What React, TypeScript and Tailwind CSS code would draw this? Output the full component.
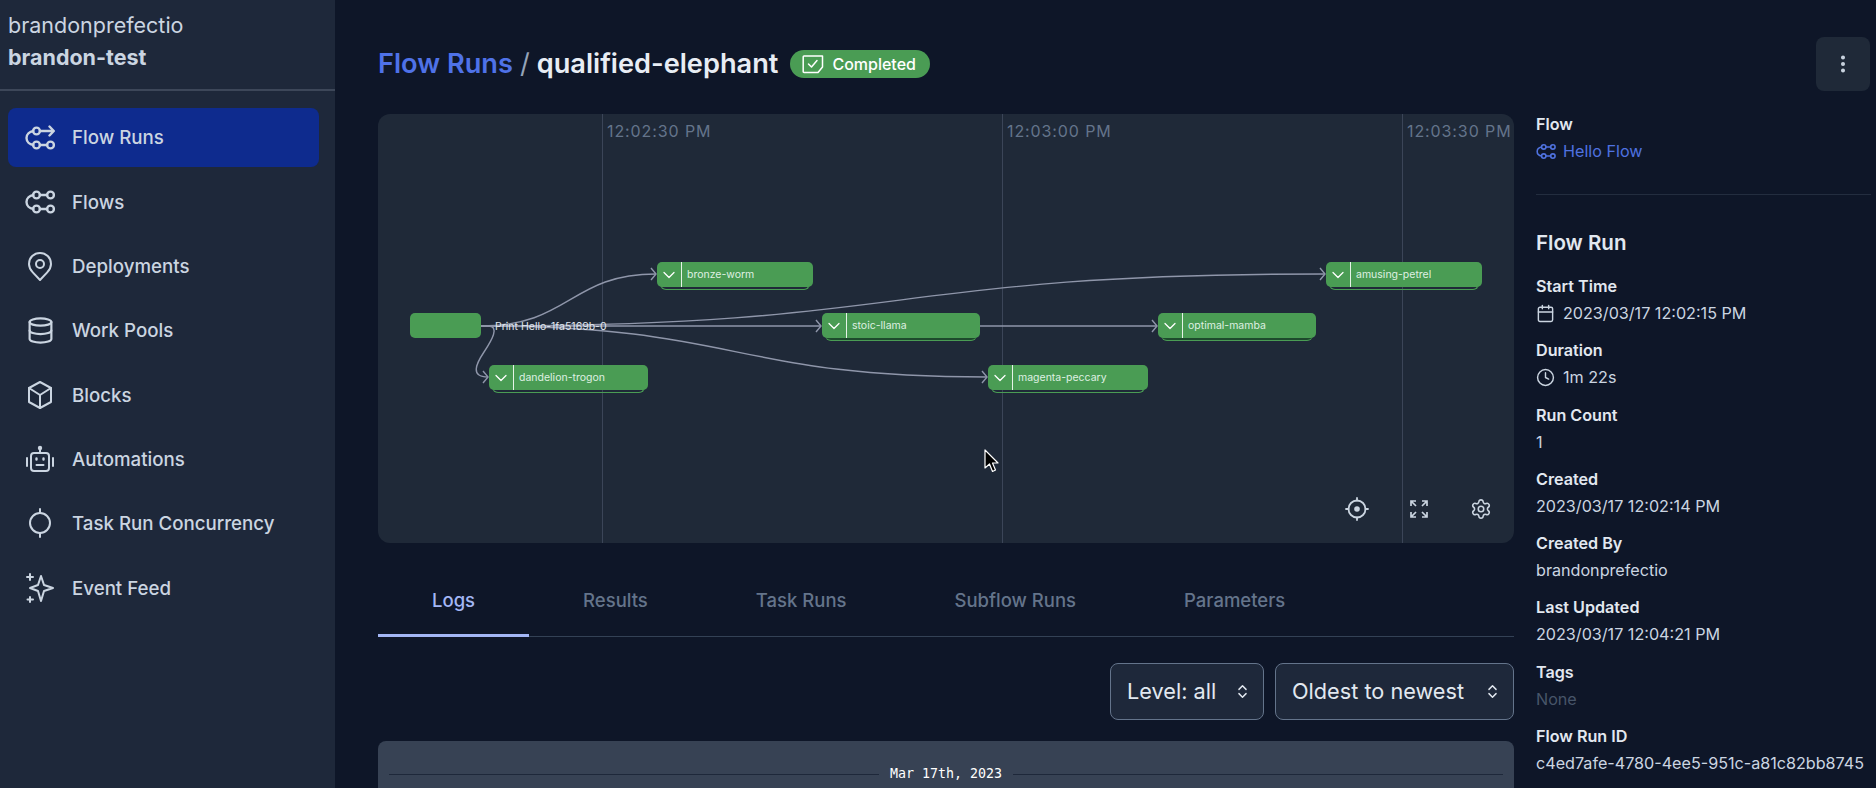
import { Calendar, ChevronDown, ChevronsUpDown, Clock, Database, EllipsisVertical, Settings } from "lucide-react";

function FlowIcon({ className, arrow }: { className: string; arrow?: boolean }) {
    return (
        <svg viewBox="0 0 30 26" fill="none" stroke="currentColor" strokeWidth="2.4" strokeLinecap="round" strokeLinejoin="round" className={className}>
            <path d="M8.3 6C4.5 6.6 1.5 9.5 1.5 13C1.5 16.5 4.5 19.4 8.3 20" />
            <circle cx="11.5" cy="6" r="3.4" />
            <circle cx="11.5" cy="20" r="3.4" />
            <path d="M14.9 20H22.1" />
            <circle cx="25.5" cy="20" r="3.4" />
            {arrow ? (
                <path d="M14.9 6H28.5M24.5 1.5L28.8 6L24.5 10.5" />
            ) : (
                <>
                    <path d="M14.9 6H22.1" />
                    <circle cx="25.5" cy="6" r="3.4" />
                </>
            )}
        </svg>
    );
}

function PinIcon() {
    return (
        <svg viewBox="0 0 30 30" fill="none" stroke="currentColor" strokeWidth="2" strokeLinecap="round" strokeLinejoin="round" className="w-[30px] h-[30px]">
            <path d="M15 29L7.8 21.4C5.4 18.8 4 16.6 4 13C4 6.5 9 2 15 2C21 2 26 6.5 26 13C26 16.6 24.6 18.8 22.2 21.4L15 29Z" />
            <circle cx="15" cy="13" r="4" />
        </svg>
    );
}

function CubeIcon() {
    return (
        <svg viewBox="0 0 30 30" fill="none" stroke="currentColor" strokeWidth="2" strokeLinecap="round" strokeLinejoin="round" className="w-[30px] h-[30px]">
            <path d="M15 2L26 8V22L15 28L4 22V8L15 2Z" />
            <path d="M4 8L15 15L26 8M15 15V28" />
        </svg>
    );
}

function BotIcon() {
    return (
        <svg viewBox="0 0 30 30" fill="none" stroke="currentColor" strokeWidth="2" strokeLinecap="round" strokeLinejoin="round" className="w-[30px] h-[30px]">
            <circle cx="15" cy="4" r="2.2" fill="currentColor" stroke="none" />
            <path d="M15 6V9" />
            <rect x="6" y="9" width="18" height="18" rx="3" />
            <path d="M2 14V22M28 14V22M11.5 21H18.5" />
            <path d="M11.5 14.5V15.5M18.5 14.5V15.5" strokeWidth="2.4" />
        </svg>
    );
}

function ConcurrencyIcon() {
    return (
        <svg viewBox="0 0 30 30" fill="none" stroke="currentColor" strokeWidth="2" strokeLinecap="round" className="w-[30px] h-[30px]">
            <circle cx="15" cy="15" r="10" />
            <path d="M15 1V5M15 25V29" />
        </svg>
    );
}

function SparkIcon() {
    return (
        <svg viewBox="0 0 30 30" fill="none" stroke="currentColor" strokeWidth="2" strokeLinecap="round" strokeLinejoin="round" className="w-[30px] h-[30px]">
            <path d="M16 3L19 12L28 15L19 18L16 28L13 18L5 15L13 12L16 3Z" />
            <path d="M5 1V7M2 4H8M5 24V29M2.5 26.5H8" />
        </svg>
    );
}

function LocateIcon() {
    return (
        <svg viewBox="0 0 24 24" fill="none" stroke="currentColor" strokeWidth="1.8" strokeLinecap="round" className="w-[24px] h-[24px]">
            <circle cx="12" cy="12" r="8.5" />
            <circle cx="12" cy="12" r="2.8" fill="currentColor" stroke="none" />
            <path d="M12 1V3.5M12 20.5V23M1 12H3.5M20.5 12H23" />
        </svg>
    );
}

function ExpandIcon() {
    return (
        <svg viewBox="0 0 20 20" fill="none" stroke="currentColor" strokeWidth="1.7" className="w-[20px] h-[20px]">
            <path d="M2 7V2H7M2 2L7 7M13 2H18V7M18 2L13 7M2 13V18H7M2 18L7 13M18 13V18H13M18 18L13 13" />
        </svg>
    );
}

function BadgeIcon() {
    return (
        <svg viewBox="0 0 22 20" fill="none" stroke="currentColor" strokeWidth="1.5" strokeLinecap="round" strokeLinejoin="round" className="w-[22px] h-[20px]">
            <path d="M2 2H20.5V13L16 18.5H2C1.6 18.5 1.2 18.1 1.2 17.7V2.8C1.2 2.4 1.6 2 2 2Z" />
            <path d="M6.5 10L9.5 13L15 6.5" />
        </svg>
    );
}

function Cursor() {
    return (
        <svg viewBox="0 0 15 24" className="absolute left-[606px] top-[335px] w-[15px] h-[24px]">
            <path d="M1 1V19L5.5 15L8.5 22.5L11.5 21L8.5 14H14L1 1Z" fill="#000" stroke="#fff" strokeWidth="1.2" strokeLinejoin="round" />
        </svg>
    );
}

const navItems = [
    { label: "Flow Runs", icon: <FlowIcon arrow className="w-[30px] h-[26px]" />, active: true },
    { label: "Flows", icon: <FlowIcon className="w-[30px] h-[26px]" /> },
    { label: "Deployments", icon: <PinIcon /> },
    { label: "Work Pools", icon: <Database size={29} strokeWidth={1.8} /> },
    { label: "Blocks", icon: <CubeIcon /> },
    { label: "Automations", icon: <BotIcon /> },
    { label: "Task Run Concurrency", icon: <ConcurrencyIcon /> },
    { label: "Event Feed", icon: <SparkIcon /> },
];

function Sidebar() {
    return (
        <div className="w-[335px] shrink-0 h-full bg-[#1e283a] text-[#cbd5e1]">
            <div className="h-[91px] border-b-2 border-[#3d4759] pl-2 pt-[9px] text-[21.5px] leading-[32px]">
                <div>brandonprefectio</div>
                <div className="font-bold">brandon-test</div>
            </div>
            <div className="flex flex-col gap-[5.3px] pt-[17px] pl-2 pr-4">
                {navItems.map((item) => (
                    <div
                        key={item.label}
                        className={item.active ? "h-[59px] flex items-center rounded-lg bg-[#0e2b8e]" : "h-[59px] flex items-center rounded-lg"}
                    >
                        <div className="w-[64px] flex justify-center">{item.icon}</div>
                        <span className="pt-[2px] text-[18.7px] font-medium">{item.label}</span>
                    </div>
                ))}
            </div>
        </div>
    );
}

function GraphNode({ label, className, dark }: { label: string; className: string; dark?: boolean }) {
    return (
        <div className={"absolute h-[25px] " + className}>
            <div
                className={
                    dark
                        ? "absolute left-[3px] right-[3px] top-[22px] h-[6px] rounded-b-md bg-[#1d4a2c] border-b border-[#4a9c54]"
                        : "absolute left-[3px] right-[3px] top-[22px] h-[6px] rounded-b-md border-b border-x border-[#4a9c54]"
                }
            />
            <div className="relative h-full flex items-center rounded-[5px] bg-[#4a9c54] text-[#dff0e2]">
                <div className="w-[25px] h-full flex items-center justify-center border-r border-[#e6f3e8] text-white">
                    <ChevronDown size={20} strokeWidth={1.5} />
                </div>
                <span className="pl-[5px] pt-[1px] text-[10.5px]">{label}</span>
            </div>
        </div>
    );
}

function Edge({ d, x, y }: { d: string; x: number; y: number }) {
    return (
        <g>
            <path d={d} />
            <path d={`M${x - 5} ${y - 6}L${x} ${y}L${x - 5} ${y + 6}`} />
        </g>
    );
}

function Graph() {
    return (
        <div className="relative h-[429px] rounded-xl bg-[#1f2938] overflow-hidden">
            <div className="absolute left-[224px] top-0 bottom-0 border-l border-[#3b4558]" />
            <div className="absolute left-[624px] top-0 bottom-0 border-l border-[#3b4558]" />
            <div className="absolute left-[1024px] top-0 bottom-0 border-l border-[#3b4558]" />
            <div className="absolute left-[229px] top-[5px] text-[16px] tracking-[0.9px] text-[#64748b]">12:02:30 PM</div>
            <div className="absolute left-[629px] top-[5px] text-[16px] tracking-[0.9px] text-[#64748b]">12:03:00 PM</div>
            <div className="absolute left-[1029px] top-[5px] text-[16px] tracking-[0.9px] text-[#64748b]">12:03:30 PM</div>

            <svg viewBox="378 114 1136 429" fill="none" stroke="#8f96aa" strokeWidth="1.4" className="absolute inset-0 w-full h-full">
                <Edge d="M481 326C570 326 570 274 656 274" x={656} y={274} />
                <Edge d="M481 326H488C500 326 492 340 484 352C476 364 470 377 488 377" x={488} y={377} />
                <Edge d="M481 326C920 326 880 274 1325 274" x={1325} y={274} />
                <Edge d="M481 326H821" x={821} y={326} />
                <Edge d="M980 326H1157" x={1157} y={326} />
                <Edge d="M481 326C740 326 730 377 987 377" x={987} y={377} />
            </svg>

            <div className="absolute left-[32px] top-[199px] w-[71px] h-[25px] rounded-[5px] bg-[#4a9c54]" />
            <div className="absolute left-[117px] top-[205px] text-[10.5px] text-[#e2e8f0]">Print Hello-1fa5169b-0</div>

            <GraphNode label="bronze-worm" className="left-[279px] top-[148px] w-[156px]" />
            <GraphNode label="dandelion-trogon" className="left-[111px] top-[251px] w-[159px]" />
            <GraphNode label="stoic-llama" className="left-[444px] top-[199px] w-[158px]" dark />
            <GraphNode label="optimal-mamba" className="left-[780px] top-[199px] w-[158px]" dark />
            <GraphNode label="magenta-peccary" className="left-[610px] top-[251px] w-[160px]" />
            <GraphNode label="amusing-petrel" className="left-[948px] top-[148px] w-[156px]" />

            <Cursor />

            <div className="absolute left-[967px] top-[383px] w-[24px] h-[24px] text-[#cbd5e1]"><LocateIcon /></div>
            <div className="absolute left-[1031px] top-[385px] w-[20px] h-[20px] text-[#cbd5e1]"><ExpandIcon /></div>
            <div className="absolute left-[1092px] top-[384px] w-[24px] h-[24px] text-[#cbd5e1]"><Settings size={22} strokeWidth={1.7} /></div>
        </div>
    );
}

const tabs = ["Logs", "Results", "Task Runs", "Subflow Runs", "Parameters"];

function Tabs() {
    return (
        <div className="mt-[20px] h-[74px] flex border-b border-[#334155]">
            {tabs.map((tab, i) => (
                <div
                    key={tab}
                    className={
                        i === 0
                            ? "px-[54px] pt-[23px] h-[74px] text-[18.5px] leading-[28px] font-medium text-[#a3b6f5] border-b-[3px] border-[#a3b6f5]"
                            : "px-[54px] pt-[23px] h-[74px] text-[18.5px] leading-[28px] font-medium text-[#64748b]"
                    }
                >
                    {tab}
                </div>
            ))}
        </div>
    );
}

function SelectBox({ label, className }: { label: string; className: string }) {
    return (
        <div className={"h-[57px] flex items-center justify-between pl-[16px] pr-[12px] rounded-lg border border-[#64748b] bg-[#1e283a] text-[21.7px] text-[#e2e8f0] " + className}>
            <span>{label}</span>
            <ChevronsUpDown size={17} strokeWidth={2} />
        </div>
    );
}

function Field({ label, value, icon, muted }: { label: string; value: string; icon?: React.ReactNode; muted?: boolean }) {
    return (
        <div className="h-[64.3px]">
            <div className="text-[16.15px] leading-[27px] font-semibold text-[#e2e8f0]">{label}</div>
            <div className={muted ? "flex items-center gap-2 text-[16.15px] leading-[27px] text-[#475569]" : "flex items-center gap-2 text-[16.15px] leading-[27px] text-[#cbd5e1]"}>
                {icon}
                <span>{value}</span>
            </div>
        </div>
    );
}

function Details() {
    return (
        <div className="w-[335px] shrink-0 -mt-[3px]">
            <div className="text-[16.15px] leading-[27px] font-semibold text-[#e2e8f0]">Flow</div>
            <div className="flex items-center gap-[7px] text-[16.15px] leading-[27px] text-[#4f72e0]">
                <FlowIcon className="w-[20px] h-[17px]" />
                <span>Hello Flow</span>
            </div>
            <div className="mt-[29px] border-t border-[#232d3f]" />
            <div className="mt-[33px] text-[20.5px] leading-[30px] font-semibold text-[#e2e8f0]">Flow Run</div>
            <div className="mt-[15px]">
                <Field label="Start Time" value="2023/03/17 12:02:15 PM" icon={<Calendar size={19} strokeWidth={1.8} />} />
                <Field label="Duration" value="1m 22s" icon={<Clock size={19} strokeWidth={1.8} />} />
                <Field label="Run Count" value="1" />
                <Field label="Created" value="2023/03/17 12:02:14 PM" />
                <Field label="Created By" value="brandonprefectio" />
                <Field label="Last Updated" value="2023/03/17 12:04:21 PM" />
                <Field label="Tags" value="None" muted />
                <Field label="Flow Run ID" value="c4ed7afe-4780-4ee5-951c-a81c82bb8745" />
            </div>
        </div>
    );
}

export default function App() {
    return (
        <div className="flex h-screen overflow-hidden bg-[#0e1628] font-['Inter',sans-serif]">
            <Sidebar />
            <div className="flex-1 min-w-0 pl-[43px] pr-[6px]">
                <div className="mt-[37px] h-[54px] flex items-center justify-between">
                    <div className="flex items-center text-[27.2px] font-semibold">
                        <span className="text-[#4f72e8]">Flow Runs</span>
                        <span className="mx-[7px] font-normal text-[#94a3b8]">/</span>
                        <span className="text-[#e8edf4]">qualified-elephant</span>
                        <div className="ml-[12px] h-[28px] w-[140px] flex items-center gap-[8px] pl-[12px] rounded-full bg-[#4a9c54] text-[16px] font-medium text-white">
                            <BadgeIcon />
                            <span>Completed</span>
                        </div>
                    </div>
                    <div className="w-[54px] h-[54px] flex items-center justify-center rounded-lg bg-[#1f2938] text-[#cbd5e1]">
                        <EllipsisVertical size={22} strokeWidth={2.4} />
                    </div>
                </div>

                <div className="mt-[23px] flex gap-[22px]">
                    <div className="w-[1136px] shrink-0">
                        <Graph />
                        <Tabs />
                        <div className="mt-[26px] flex justify-end gap-[11px]">
                            <SelectBox label="Level: all" className="w-[154px]" />
                            <SelectBox label="Oldest to newest" className="w-[239px]" />
                        </div>
                        <div className="mt-[21px] h-[100px] rounded-t-lg bg-[#374254] pt-[24px] px-[11px]">
                            <div className="flex items-center gap-[11px]">
                                <div className="flex-1 border-t border-[#1e283a]" />
                                <span className="font-['DejaVu_Sans_Mono',monospace] text-[13.3px] leading-[18px] text-white">Mar 17th, 2023</span>
                                <div className="flex-1 border-t border-[#1e283a]" />
                            </div>
                        </div>
                    </div>
                    <Details />
                </div>
            </div>
        </div>
    );
}
